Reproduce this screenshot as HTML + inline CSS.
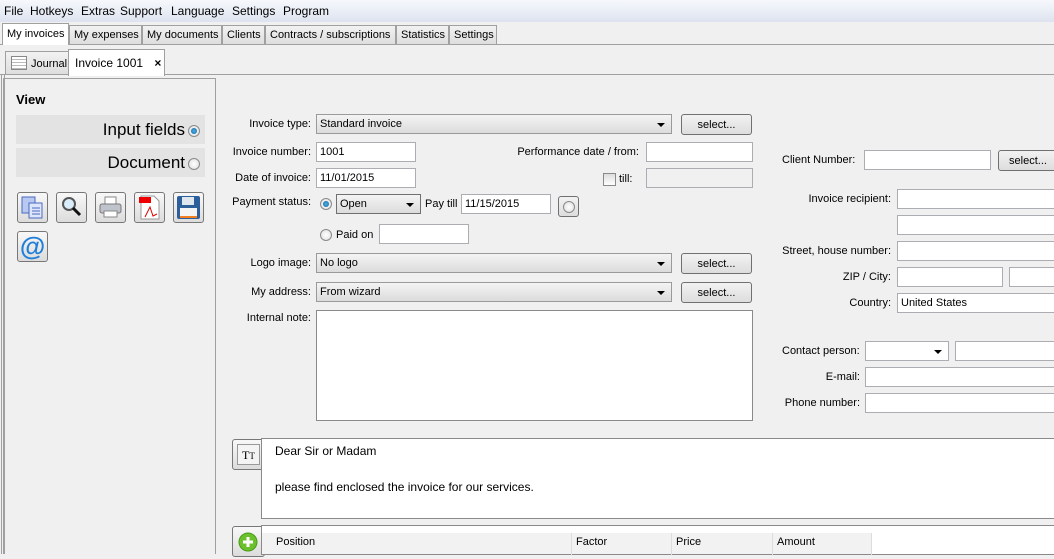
<!DOCTYPE html>
<html><head><meta charset="utf-8"><style>
*{box-sizing:border-box;margin:0;padding:0}
body{width:1054px;height:554px;overflow:hidden;background:#f0f0f0;font-family:"Liberation Sans",sans-serif;font-size:11px;color:#000;position:relative}
.a{position:absolute}
.in{position:absolute;background:#fff;border:1px solid #abadb3;height:20px;padding:3px 3px 0;white-space:nowrap;overflow:hidden}
.dis{background:#f0f0f0}
.sel{position:absolute;border:1px solid #9a9a9a;height:20px;padding:3px 3px 0;background:linear-gradient(#f4f4f4,#dcdcdc)}
.sel:after{content:"";position:absolute;right:6px;top:8px;border-left:4px solid transparent;border-right:4px solid transparent;border-top:4px solid #000}
.btn{position:absolute;border:1px solid #707070;border-radius:3px;height:21px;text-align:center;padding-top:4px;background:linear-gradient(#f2f2f2,#dddddd)}
.lb{position:absolute;text-align:right;white-space:nowrap}
.tab{position:absolute;top:25px;height:19px;border:1px solid #a0a0a0;border-bottom:none;background:linear-gradient(#f2f2f2,#dedede);padding:3px 4px 0;white-space:nowrap}
.ib{position:absolute;width:31px;height:31px;border:1px solid #777;border-radius:3px;background:linear-gradient(#f8f8f8,#dcdcdc)}
.rad{position:absolute;width:12px;height:12px;border-radius:50%;border:1px solid #8a8a8a;background:radial-gradient(#fff,#ddd)}
.rad.on:after{content:"";position:absolute;left:2px;top:2px;width:6px;height:6px;border-radius:50%;background:radial-gradient(#4fb3e8,#0b5e9e)}
</style></head><body>
<div class="a" style="left:0;top:0;width:1054px;height:22px;background:linear-gradient(#f6f8fc,#dde3ef);font-size:12px">
<span class="a" style="left:4px;top:4px">File</span><span class="a" style="left:30px;top:4px">Hotkeys</span><span class="a" style="left:81px;top:4px">Extras</span><span class="a" style="left:120px;top:4px">Support</span><span class="a" style="left:171px;top:4px">Language</span><span class="a" style="left:232px;top:4px">Settings</span><span class="a" style="left:283px;top:4px">Program</span></div>
<div class="a" style="left:0;top:44px;width:1054px;height:1px;background:#a0a0a0"></div>
<div class="tab" style="left:2px;top:23px;height:22px;width:67px;background:#fff;padding-top:4px">My invoices</div>
<div class="tab" style="left:69px;width:73px">My expenses</div>
<div class="tab" style="left:142px;width:80px">My documents</div>
<div class="tab" style="left:222px;width:43px">Clients</div>
<div class="tab" style="left:265px;width:131px">Contracts / subscriptions</div>
<div class="tab" style="left:396px;width:53px">Statistics</div>
<div class="tab" style="left:449px;width:48px">Settings</div>
<div class="a" style="left:0;top:74px;width:1054px;height:1px;background:#a0a0a0"></div>
<div class="tab" style="left:5px;top:51px;height:23px;width:64px;padding:6px 0 0 25px">Journal<div class="a" style="left:5px;top:4px;width:16px;height:14px;border:1px solid #888;background:repeating-linear-gradient(#fff 0 2px,#bbb 2px 3px)"></div></div>
<div class="tab" style="left:68px;top:49px;height:27px;width:97px;background:#fff;padding:6px 0 0 6px;font-size:12px">Invoice 1001 <b style="margin-left:8px">×</b></div>
<div class="a" style="left:1px;top:74px;width:4px;height:480px;border-left:1px solid #a0a0a0;border-right:1px solid #a0a0a0"></div>
<div class="a" style="left:3px;top:78px;width:213px;height:476px;border:1px solid #a0a0a0;border-bottom:none"></div>
<div class="a" style="left:16px;top:92px;font-weight:bold;font-size:13px">View</div>
<div class="a" style="left:16px;top:115px;width:189px;height:29px;background:#e3e3e3;text-align:right;padding:5px 20px 0 0;font-size:17px">Input fields</div>
<div class="rad on" style="left:188px;top:125px"></div>
<div class="a" style="left:16px;top:148px;width:189px;height:29px;background:#e3e3e3;text-align:right;padding:5px 20px 0 0;font-size:17px">Document</div>
<div class="rad" style="left:188px;top:158px"></div>
<div class="ib" style="left:17px;top:192px"><svg width="29" height="29"><rect x="4" y="4" width="13" height="16" fill="#b8c8f0" stroke="#4a6ac0"/><rect x="11" y="10" width="13" height="15" fill="#dde6fb" stroke="#4a6ac0"/><path d="M14 15h8M14 18h8M14 21h8" stroke="#4a6ac0"/></svg></div>
<div class="ib" style="left:56px;top:192px"><svg width="29" height="29"><circle cx="12" cy="11" r="6" fill="#d8ecfa" stroke="#555" stroke-width="2"/><path d="M16 15l7 7" stroke="#111" stroke-width="3"/></svg></div>
<div class="ib" style="left:95px;top:192px"><svg width="29" height="29"><rect x="9" y="4" width="11" height="8" fill="#fff" stroke="#888"/><rect x="4" y="11" width="21" height="9" rx="2" fill="#bfc3cc" stroke="#777"/><rect x="8" y="18" width="13" height="6" fill="#fff" stroke="#888"/></svg></div>
<div class="ib" style="left:134px;top:192px"><svg width="29" height="29"><path d="M6 3h13l5 5v18H6z" fill="#fff" stroke="#999"/><rect x="4" y="4" width="12" height="6" fill="#e00"/><path d="M10 24l5-10 3 9 4-2" stroke="#d00" fill="none"/></svg></div>
<div class="ib" style="left:173px;top:192px"><svg width="29" height="29"><rect x="3" y="3" width="23" height="23" rx="2" fill="#2d5f9a"/><rect x="8" y="4" width="12" height="8" fill="#dfe6ee"/><rect x="6" y="15" width="17" height="10" fill="#f4f4f4"/><rect x="6" y="23" width="17" height="2" fill="#f08020"/></svg></div>
<div class="ib" style="left:17px;top:231px"><svg width="29" height="29"><text x="14.5" y="23" text-anchor="middle" font-family="Liberation Sans" font-size="26" font-weight="bold" fill="#1f7fd8">@</text></svg></div>

<div class="lb" style="left:220px;width:91px;top:118px">Invoice type:</div>
<div class="sel" style="left:316px;top:114px;width:356px">Standard invoice</div>
<div class="btn" style="left:681px;top:114px;width:71px">select...</div>
<div class="lb" style="left:220px;width:91px;top:146px">Invoice number:</div>
<div class="in" style="left:316px;top:142px;width:100px">1001</div>
<div class="lb" style="left:480px;width:159px;top:146px">Performance date / from:</div>
<div class="in" style="left:646px;top:142px;width:107px"></div>
<div class="lb" style="left:220px;width:91px;top:172px">Date of invoice:</div>
<div class="in" style="left:316px;top:168px;width:100px">11/01/2015</div>
<div class="a" style="left:603px;top:173px;width:13px;height:13px;border:1px solid #8a8a8a;background:linear-gradient(#ddd,#fff)"></div>
<div class="lb" style="left:619px;top:173px">till:</div>
<div class="in dis" style="left:646px;top:168px;width:107px"></div>
<div class="lb" style="left:220px;width:91px;top:196px">Payment status:</div>
<div class="rad on" style="left:320px;top:198px"></div>
<div class="sel" style="left:336px;top:194px;width:85px;border-color:#707070">Open</div>
<div class="lb" style="left:425px;top:198px">Pay till</div>
<div class="in" style="left:461px;top:194px;width:90px">11/15/2015</div>
<div class="btn" style="left:558px;top:196px;width:21px;height:21px"><div class="rad" style="left:4px;top:4px"></div></div>
<div class="rad" style="left:320px;top:229px"></div>
<div class="lb" style="left:336px;top:229px">Paid on</div>
<div class="in" style="left:379px;top:224px;width:90px"></div>
<div class="lb" style="left:220px;width:91px;top:257px">Logo image:</div>
<div class="sel" style="left:316px;top:253px;width:356px">No logo</div>
<div class="btn" style="left:681px;top:253px;width:71px">select...</div>
<div class="lb" style="left:220px;width:91px;top:286px">My address:</div>
<div class="sel" style="left:316px;top:282px;width:356px">From wizard</div>
<div class="btn" style="left:681px;top:282px;width:71px">select...</div>
<div class="lb" style="left:220px;width:91px;top:312px">Internal note:</div>
<div class="in" style="left:316px;top:310px;width:437px;height:111px;border-color:#8a8a8a"></div>

<div class="lb" style="left:782px;top:154px">Client Number:</div>
<div class="in" style="left:864px;top:150px;width:127px"></div>
<div class="btn" style="left:998px;top:150px;width:60px">select...</div>
<div class="lb" style="left:780px;width:111px;top:193px">Invoice recipient:</div>
<div class="in" style="left:897px;top:189px;width:160px"></div>
<div class="in" style="left:897px;top:215px;width:160px"></div>
<div class="lb" style="left:780px;width:111px;top:245px">Street, house number:</div>
<div class="in" style="left:897px;top:241px;width:160px"></div>
<div class="lb" style="left:780px;width:111px;top:271px">ZIP / City:</div>
<div class="in" style="left:897px;top:267px;width:106px"></div>
<div class="in" style="left:1009px;top:267px;width:50px"></div>
<div class="lb" style="left:780px;width:111px;top:297px">Country:</div>
<div class="in" style="left:897px;top:293px;width:160px">United States</div>
<div class="lb" style="left:782px;top:345px">Contact person:</div>
<div class="sel" style="left:865px;top:341px;width:84px;background:#fff;border-color:#abadb3"></div>
<div class="in" style="left:955px;top:341px;width:105px"></div>
<div class="lb" style="left:770px;width:90px;top:371px">E-mail:</div>
<div class="in" style="left:865px;top:367px;width:195px"></div>
<div class="lb" style="left:770px;width:90px;top:397px">Phone number:</div>
<div class="in" style="left:865px;top:393px;width:195px"></div>

<div class="ib" style="left:232px;top:439px;width:33px;height:31px"><div class="a" style="left:4px;top:4px;width:23px;height:21px;border:1px solid #999;background:#f4f4f4;font-family:'Liberation Serif',serif;font-size:12px;padding:3px 0 0 4px">T<span style="font-size:9px">T</span></div></div>
<div class="a" style="left:261px;top:438px;width:800px;height:81px;background:#fff;border:1px solid #8a8a8a;font-size:12px;padding:3px 0 0 13px;line-height:18px">Dear Sir or Madam<br><br>please find enclosed the invoice for our services.</div>
<div class="ib" style="left:232px;top:526px;width:33px"><svg width="31" height="29"><circle cx="15" cy="15" r="9" fill="#6cc02c" stroke="#4a9a1a"/><path d="M15 10v10M10 15h10" stroke="#fff" stroke-width="3"/></svg></div>
<div class="a" style="left:261px;top:525px;width:800px;height:30px;background:#fff;border:1px solid #8a8a8a"></div>
<div class="a" style="left:262px;top:532px;width:610px;height:22px;background:#f2f2f2;border-top:1px solid #fff;font-size:11px">
<div class="a" style="left:0;top:0;width:310px;height:22px;border-right:1px solid #ddd;padding:3px 0 0 14px">Position</div>
<div class="a" style="left:310px;top:0;width:100px;height:22px;border-right:1px solid #ddd;padding:3px 0 0 4px">Factor</div>
<div class="a" style="left:410px;top:0;width:101px;height:22px;border-right:1px solid #ddd;padding:3px 0 0 4px">Price</div>
<div class="a" style="left:511px;top:0;width:99px;height:22px;border-right:1px solid #ddd;padding:3px 0 0 4px">Amount</div></div>
</body></html>
